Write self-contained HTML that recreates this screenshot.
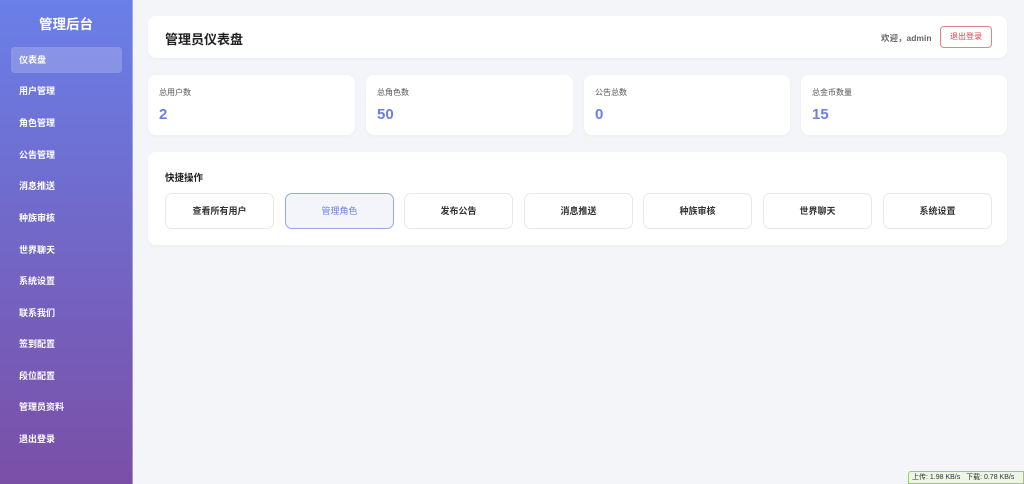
<!DOCTYPE html><html><head><meta charset="utf-8"><style>
*{margin:0;padding:0;box-sizing:border-box}
body{width:1024px;height:484px;overflow:hidden;background:#f4f5f9;font-family:"Liberation Sans","Noto Sans CJK SC",sans-serif;position:relative}
.sb{position:absolute;left:0;top:0;width:133px;height:484px;background:linear-gradient(180deg,#6a7fe8,#7a4fa6);color:#fff;border-right:1px solid rgba(255,255,255,.35)}
.sb h1{font-size:13.5px;text-align:center;margin-top:13px;font-weight:bold;height:20px}
.it{position:absolute;left:11px;width:111px;height:26px;font-size:9px;line-height:26px;padding-left:8px;font-weight:bold;border-radius:4px}
.it.a{background:rgba(255,255,255,.2)}
.card{position:absolute;background:#fff;border-radius:8px;box-shadow:0 1px 3px rgba(0,0,0,.04)}
.st .l{font-size:8px;color:#555;position:absolute;left:11px;top:12px}
.st .v{font-size:15px;color:#6a7fe8;font-weight:bold;position:absolute;left:11px;top:31px}
.b{position:absolute;top:193px;width:109px;height:36px;border:1px solid #e6e8ee;border-radius:7px;background:#fff;font-size:9px;text-align:center;line-height:34px;color:#333;font-weight:bold}
.b.a{border-color:#97a6ef;background:#f4f5fb;color:#6a7fe8;font-weight:normal}
</style></head><body>
<div class="sb"><h1>管理后台</h1>
<div class="it a" style="top:47px">仪表盘</div>
<div class="it" style="top:78px">用户管理</div>
<div class="it" style="top:110px">角色管理</div>
<div class="it" style="top:142px">公告管理</div>
<div class="it" style="top:173px">消息推送</div>
<div class="it" style="top:205px">种族审核</div>
<div class="it" style="top:237px">世界聊天</div>
<div class="it" style="top:268px">系统设置</div>
<div class="it" style="top:300px">联系我们</div>
<div class="it" style="top:331px">签到配置</div>
<div class="it" style="top:363px">段位配置</div>
<div class="it" style="top:394px">管理员资料</div>
<div class="it" style="top:426px">退出登录</div>
</div>
<div class="card" style="left:148px;top:16px;width:859px;height:42px">
<div style="position:absolute;left:17px;top:13px;font-size:13px;font-weight:bold;color:#222">管理员仪表盘</div>
<div style="position:absolute;left:733px;top:16px;font-size:8.5px;color:#666;font-weight:bold">欢迎，admin</div>
<div style="position:absolute;left:792px;top:10px;width:52px;height:22px;border:1px solid #e8808a;border-radius:4px;font-size:8px;color:#e04050;text-align:center;line-height:20px">退出登录</div>
</div>
<div class="card st" style="left:148px;top:75px;width:207px;height:60px"><div class="l">总用户数</div><div class="v">2</div></div>
<div class="card st" style="left:366px;top:75px;width:207px;height:60px"><div class="l">总角色数</div><div class="v">50</div></div>
<div class="card st" style="left:584px;top:75px;width:206px;height:60px"><div class="l">公告总数</div><div class="v">0</div></div>
<div class="card st" style="left:801px;top:75px;width:206px;height:60px"><div class="l">总金币数量</div><div class="v">15</div></div>
<div class="card" style="left:148px;top:152px;width:859px;height:93px">
<div style="position:absolute;left:17px;top:18px;font-size:9.5px;font-weight:bold;color:#222">快捷操作</div></div>
<div class="b" style="left:165px">查看所有用户</div>
<div class="b a" style="left:285px">管理角色</div>
<div class="b" style="left:404px">发布公告</div>
<div class="b" style="left:524px">消息推送</div>
<div class="b" style="left:643px">种族审核</div>
<div class="b" style="left:763px">世界聊天</div>
<div class="b" style="left:883px">系统设置</div>
<div style="position:absolute;left:908px;top:471px;width:116px;height:13px;background:#eef5e4;border:1px solid #9c6;border-radius:3px 0 0 0;font-size:7px;line-height:11px;padding-left:3px;color:#333">上传: 1.98 KB/s &nbsp; 下载: 0.78 KB/s</div>
</body></html>
